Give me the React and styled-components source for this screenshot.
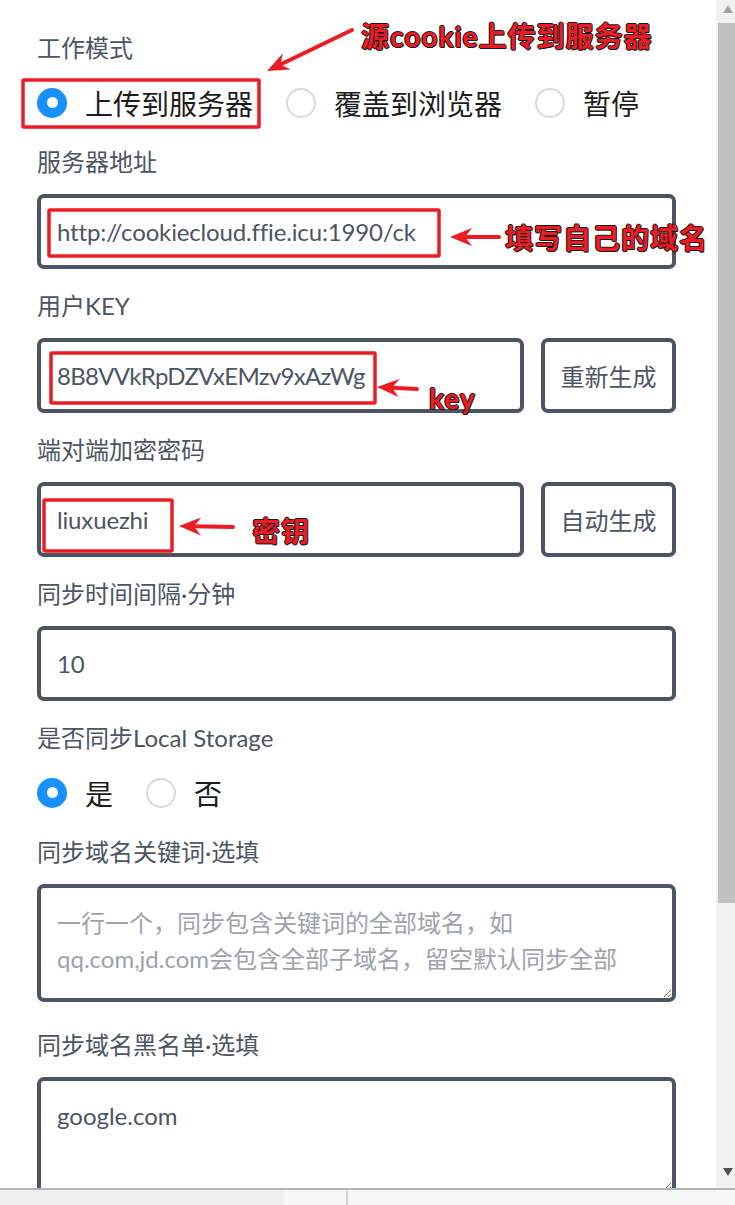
import React from 'react'
import styled, { createGlobalStyle } from 'styled-components'

const GlobalStyle = createGlobalStyle`
  html, body {
    margin: 0;
    padding: 0;
    height: 100%;
    overflow: hidden;
    background: #fff;
  }
  body {
    font-family: Lato, "Noto Sans CJK SC", sans-serif;
  }
  * {
    box-sizing: border-box;
  }
`

const Frame = styled.div`
  height: 100vh;
  display: flex;
  flex-direction: column;
`

const Viewport = styled.div`
  flex: 1;
  min-height: 0;
  display: flex;
`

const Page = styled.div`
  flex: 1;
  position: relative;
  overflow: hidden;
`

const Form = styled.div`
  display: flex;
  flex-direction: column;
  gap: 19px;
  padding: 30px 40px 0 37px;
`

const Field = styled.div`
  display: flex;
  flex-direction: column;
  gap: 14px;
  margin-bottom: ${p => p.$extra || 0}px;
`

const Label = styled.div`
  font-size: 24px;
  line-height: 36px;
  color: #4b5563;
`

const RadioGroup = styled.div`
  display: flex;
  align-items: center;
  height: 45px;
  gap: 33px;
`

const RadioItem = styled.label`
  display: flex;
  align-items: center;
  gap: 18px;
  font-size: 28px;
  color: #1c1c1c;
`

const Dot = styled.span`
  width: 30px;
  height: 30px;
  border-radius: 50%;
  display: flex;
  align-items: center;
  justify-content: center;
  background: ${p => (p.$checked ? '#1890ff' : '#fff')};
  border: ${p => (p.$checked ? 'none' : '2px solid #d9d9d9')};

  &::after {
    content: '';
    display: ${p => (p.$checked ? 'block' : 'none')};
    width: 11px;
    height: 11px;
    border-radius: 50%;
    background: #fff;
  }
`

const Row = styled.div`
  display: flex;
  gap: 17px;

  & > input {
    flex: 1;
    min-width: 0;
  }
`

const TextInput = styled.input`
  display: block;
  width: 100%;
  height: 75px;
  padding: 0 16px;
  border: 4px solid #4b5563;
  border-radius: 7px;
  font-family: inherit;
  font-size: 24px;
  letter-spacing: ${p => (p.$tight ? '-0.7px' : '-0.15px')};
  color: #4b5563;
  background: #fff;
  outline: none;
`

const Button = styled.button`
  flex: none;
  width: 135px;
  height: 75px;
  padding: 0;
  border: 4px solid #4b5563;
  border-radius: 7px;
  background: #fff;
  font-family: inherit;
  font-size: 24px;
  color: #4b5563;
`

const TextArea = styled.textarea`
  display: block;
  width: 100%;
  height: 118px;
  padding: 17px 16px;
  border: 4px solid #4b5563;
  border-radius: 7px;
  font-family: inherit;
  font-size: 24px;
  line-height: 36px;
  color: #4b5563;
  background: #fff;
  outline: none;

  &::placeholder {
    color: #9ca3af;
  }
`

const Scrollbar = styled.div`
  width: 19px;
  display: flex;
  flex-direction: column;
  background: #f1f1f1;
`

const ArrowBtn = styled.div`
  height: 17px;
  display: flex;
  align-items: center;
  justify-content: center;
  padding-left: 4px;
  margin-bottom: ${p => p.$mb || 0}px;

  &::before {
    content: '';
    width: 0;
    height: 0;
    border-left: 5px solid transparent;
    border-right: 5px solid transparent;
    ${p =>
      p.$down
        ? 'border-top: 8px solid #505050;'
        : 'border-bottom: 8px solid #a3a3a3;'}
  }
`

const Thumb = styled.div`
  height: 880px;
  margin: 6px 0 0 2px;
  background: #c1c1c1;
`

const Track = styled.div`
  flex: 1;
`

const StatusBar = styled.div`
  height: 17px;
  display: flex;
  border-top: 2px solid #b4b4b4;
`

const StatusSeg = styled.div`
  width: ${p => (p.$w ? `${p.$w}px` : 'auto')};
  flex: ${p => (p.$w ? 'none' : 1)};
  background: ${p => p.$bg};
  border-right: ${p => (p.$line ? '2px solid #cfd3d8' : 'none')};
`

const Marks = styled.svg`
  position: absolute;
  left: 0;
  top: 0;
  width: 100%;
  height: 100%;
  pointer-events: none;
`

const Note = styled.div`
  position: absolute;
  left: ${p => p.$x}px;
  top: ${p => p.$y}px;
  font-size: 28px;
  line-height: 30px;
  font-weight: 700;
  letter-spacing: 1px;
  color: #ec1c24;
  white-space: nowrap;
  text-shadow: 1px 0 #1a1a1a, -1px 0 #1a1a1a, 0 1px #1a1a1a, 0 -1px #1a1a1a, 1px 1px #1a1a1a;
`

const RED = '#ec1c24'

function Arrow({ from, to }) {
  const [x1, y1] = from
  const [x2, y2] = to
  const len = Math.hypot(x2 - x1, y2 - y1)
  const ux = (x2 - x1) / len
  const uy = (y2 - y1) / len
  const nx = -uy
  const ny = ux
  const L = 22
  const W = 9
  const bx = x2 - ux * L
  const by = y2 - uy * L
  const kx = x2 - ux * (L - 7)
  const ky = y2 - uy * (L - 7)
  const head = [
    [x2, y2],
    [bx + nx * W, by + ny * W],
    [kx, ky],
    [bx - nx * W, by - ny * W],
  ]
    .map(p => p.join(','))
    .join(' ')
  return (
    <g>
      <line x1={x1} y1={y1} x2={kx} y2={ky} stroke={RED} strokeWidth="4" strokeLinecap="round" />
      <polygon points={head} fill={RED} />
    </g>
  )
}

function Box({ x1, y1, x2, y2 }) {
  return (
    <rect x={x1} y={y1} width={x2 - x1} height={y2 - y1} fill="none" stroke={RED} strokeWidth="3.5" rx="1" />
  )
}

function Annotations() {
  return (
    <>
      <Marks>
        <Box x1={23} y1={80} x2={259} y2={127} />
        <Box x1={49} y1={210} x2={439} y2={256} />
        <Box x1={51} y1={353} x2={375} y2={403} />
        <Box x1={44} y1={500} x2={172} y2={551} />
        <Arrow from={[352, 30]} to={[267, 71]} />
        <Arrow from={[499, 237]} to={[450, 237]} />
        <Arrow from={[417, 389]} to={[377, 387]} />
        <Arrow from={[233, 527]} to={[179, 526]} />
      </Marks>
      <Note $x={361} $y={21}>源cookie上传到服务器</Note>
      <Note $x={505} $y={223}>填写自己的域名</Note>
      <Note $x={429} $y={383}>key</Note>
      <Note $x={252} $y={516}>密钥</Note>
    </>
  )
}

function Radio({ checked, children }) {
  return (
    <RadioItem>
      <Dot $checked={checked} />
      {children}
    </RadioItem>
  )
}

export default function App() {
  return (
    <Frame>
      <GlobalStyle />
      <Viewport>
        <Page>
          <Form>
            <Field>
              <Label>工作模式</Label>
              <RadioGroup>
                <Radio checked>上传到服务器</Radio>
                <Radio>覆盖到浏览器</Radio>
                <Radio>暂停</Radio>
              </RadioGroup>
            </Field>
            <Field>
              <Label>服务器地址</Label>
              <TextInput defaultValue="http://cookiecloud.ffie.icu:1990/ck" />
            </Field>
            <Field>
              <Label>用户KEY</Label>
              <Row>
                <TextInput $tight defaultValue="8B8VVkRpDZVxEMzv9xAzWg" />
                <Button>重新生成</Button>
              </Row>
            </Field>
            <Field>
              <Label>端对端加密密码</Label>
              <Row>
                <TextInput defaultValue="liuxuezhi" />
                <Button>自动生成</Button>
              </Row>
            </Field>
            <Field>
              <Label>同步时间间隔·分钟</Label>
              <TextInput defaultValue="10" />
            </Field>
            <Field>
              <Label>是否同步Local Storage</Label>
              <RadioGroup>
                <Radio checked>是</Radio>
                <Radio>否</Radio>
              </RadioGroup>
            </Field>
            <Field $extra={6}>
              <Label>同步域名关键词·选填</Label>
              <TextArea placeholder={'一行一个，同步包含关键词的全部域名，如\nqq.com,jd.com会包含全部子域名，留空默认同步全部'} />
            </Field>
            <Field>
              <Label>同步域名黑名单·选填</Label>
              <TextArea defaultValue="google.com" />
            </Field>
          </Form>
          <Annotations />
        </Page>
        <Scrollbar>
          <ArrowBtn />
          <Thumb />
          <Track />
          <ArrowBtn $down $mb={8} />
        </Scrollbar>
      </Viewport>
      <StatusBar>
        <StatusSeg $w={284} $bg="#efefef" />
        <StatusSeg $w={64} $bg="#f7f7f7" $line />
        <StatusSeg $bg="#f7f7f7" />
      </StatusBar>
    </Frame>
  )
}
